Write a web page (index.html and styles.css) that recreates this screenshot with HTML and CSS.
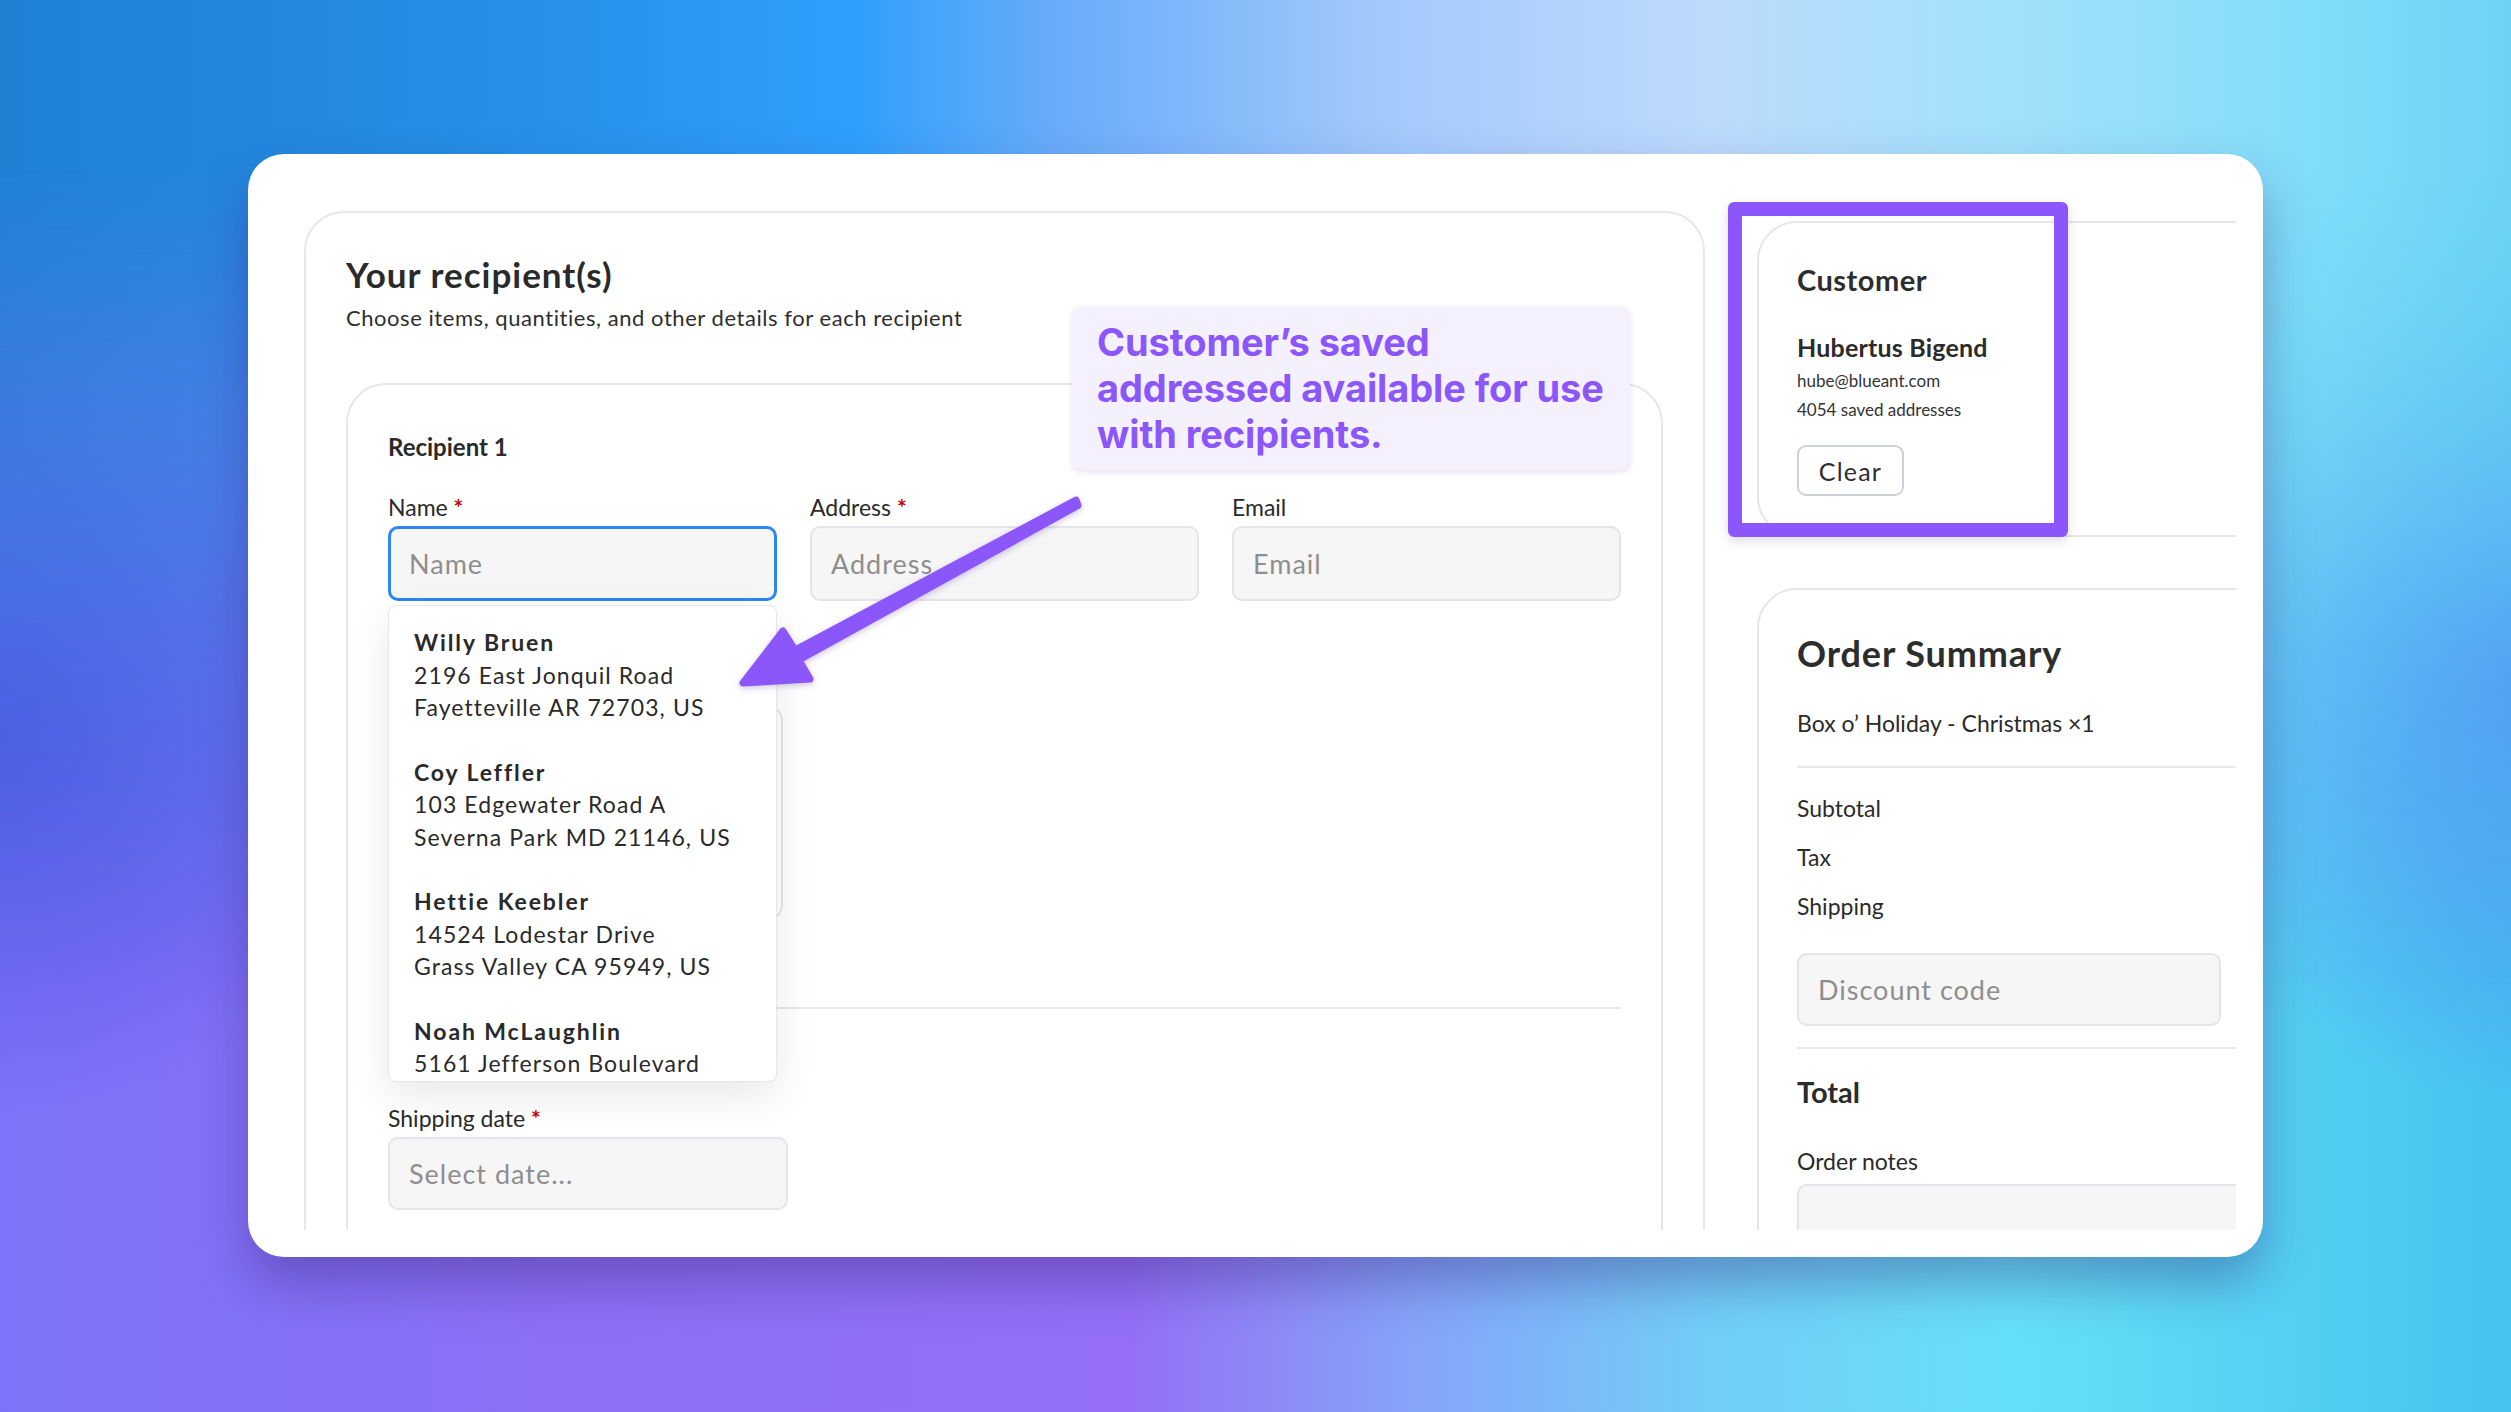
FILE: index.html
```html
<!DOCTYPE html>
<html lang="en">
<head>
  <meta charset="UTF-8" />
  <meta name="viewport" content="width=device-width, initial-scale=1.0"/>
  <title>Recipients - Checkout</title>
  <link rel="stylesheet" href="styles.css">
</head>
<body>
  <div class="frame">
    <div class="viewport">
      <div class="page">

        <!-- left: recipients form -->
        <section class="card recipients">
          <h1>Your recipient(s)</h1>
          <p class="lead">Choose items, quantities, and other details for each recipient</p>

          <div class="card recipient">
            <h3>Recipient 1</h3>
            <div class="fields">
              <div class="field">
                <label>Name <span class="req">*</span></label>
                <div class="combo">
                  <input class="input focused" placeholder="Name">
                  <ul class="suggest">
                    <li><b>Willy Bruen</b><span>2196 East Jonquil Road</span><span>Fayetteville AR 72703, US</span></li>
                    <li><b>Coy Leffler</b><span>103 Edgewater Road A</span><span>Severna Park MD 21146, US</span></li>
                    <li><b>Hettie Keebler</b><span>14524 Lodestar Drive</span><span>Grass Valley CA 95949, US</span></li>
                    <li><b>Noah McLaughlin</b><span>5161 Jefferson Boulevard</span></li>
                  </ul>
                </div>
              </div>
              <div class="field">
                <label>Address <span class="req">*</span></label>
                <input class="input" placeholder="Address">
              </div>
              <div class="field">
                <label>Email</label>
                <input class="input" placeholder="Email">
              </div>
            </div>

            <div class="items-box"></div>
            <hr class="divider">

            <div class="field date-field">
              <label>Shipping date <span class="req">*</span></label>
              <input class="input" placeholder="Select date...">
            </div>
          </div>
        </section>

        <!-- right: customer + summary -->
        <aside class="sidebar">
          <section class="card customer">
            <h2>Customer</h2>
            <div class="cust-name">Hubertus Bigend</div>
            <div class="cust-meta">hube@blueant.com</div>
            <div class="cust-meta">4054 saved addresses</div>
            <button class="btn">Clear</button>
          </section>
          <div class="highlight"></div>

          <section class="card summary">
            <h2 class="big">Order Summary</h2>
            <div class="line-item">Box o’ Holiday - Christmas ×1</div>
            <hr class="divider">
            <div class="row">Subtotal</div>
            <div class="row">Tax</div>
            <div class="row">Shipping</div>
            <input class="input discount" placeholder="Discount code">
            <hr class="divider">
            <div class="total">Total</div>
            <label class="notes-label">Order notes</label>
            <textarea class="input notes"></textarea>
          </section>
        </aside>

      </div>
    </div>
  </div>

  <!-- annotation -->
  <div class="callout">Customer’s saved addressed available for use with recipients.</div>
  <svg class="arrow" viewBox="0 0 2511 1412" width="2511" height="1412">
    <polygon points="1076,500 795,650 783,631 743,683 810,679 799,660 1078,505.5"
             fill="#8b56fa" stroke="#8b56fa" stroke-width="7" stroke-linejoin="round"/>
  </svg>
</body>
</html>
```

FILE: styles.css
```css
* { box-sizing: border-box; }

html, body { margin: 0; }

body {
  position: relative;
  width: 2511px;
  height: 1412px;
  overflow: hidden;
  padding: 154px 248px 0 248px;
  font-family: 'Lato', 'Noto Sans', sans-serif;
  color: #2b2b2b;
  background:
    radial-gradient(ellipse 420px 380px at 0% 52%, rgba(88, 84, 232, 0.95), rgba(88, 84, 232, 0) 100%),
    radial-gradient(ellipse 380px 420px at 100% 48%, rgba(74, 136, 243, 0.9), rgba(74, 136, 243, 0) 100%),
    linear-gradient(90deg, #7b73f7 0%, #8c6ff5 22%, #946ff6 45%, #86a3f8 56%, #72cdf8 68%, #66e0f8 80%, #47c2ef 100%);
}

/* top band of the backdrop, fading out downwards */
body::before {
  content: "";
  position: absolute;
  inset: 0;
  z-index: 0;
  background: linear-gradient(90deg, #1e81d4 0%, #268fe6 20%, #2f9ffb 34%, #68acfa 42%, #a3c9fb 55%, #bcdafc 68%, #a2e1fa 80%, #82ddf8 92%, #6dd3f5 100%);
  -webkit-mask-image: linear-gradient(180deg, #000 0%, #000 12%, rgba(0,0,0,0.35) 45%, transparent 70%);
  mask-image: linear-gradient(180deg, #000 0%, #000 12%, rgba(0,0,0,0.35) 45%, transparent 70%);
}

.frame {
  position: relative;
  z-index: 1;
  height: 1103px;
  padding: 0 27px 27px 0;
  background: #fff;
  border-radius: 36px;
  box-shadow: 0 26px 50px rgba(45, 25, 110, 0.35);
}

.viewport {
  height: 100%;
  overflow: hidden;
  border-radius: 36px 0 0 36px;
}

.page {
  display: flex;
  align-items: flex-start;
  gap: 52px;
  padding: 57px 0 0 56px;
}

.card {
  background: #fff;
  border: 2px solid #e7e7eb;
  border-radius: 40px;
}

/* ---------- recipients ---------- */
.recipients {
  flex: none;
  width: 1401px;
  padding: 40px 40px 60px 40px;
}

h1 {
  margin: 0;
  font-size: 35px;
  line-height: 42px;
  font-weight: 700;
  letter-spacing: 1px;
  color: #2a2a2a;
}

.lead {
  margin: 10px 0 0;
  font-size: 22px;
  line-height: 26px;
  letter-spacing: 0.55px;
  color: #2e2e2e;
}

.recipient {
  margin-top: 52px;
  padding: 47px 40px 60px 40px;
}

h3 {
  margin: 0;
  font-size: 24px;
  line-height: 29px;
  font-weight: 700;
}

.fields {
  display: grid;
  grid-template-columns: repeat(3, 1fr);
  gap: 33px;
  margin-top: 32px;
}

.field label {
  display: block;
  font-size: 23px;
  line-height: 28px;
  margin-bottom: 5px;
  color: #2a2a2a;
}

.req { color: #c40000; font-weight: 700; }

.input {
  display: block;
  width: 100%;
  height: 75px;
  padding: 0 19px;
  border: 2px solid #e5e5e9;
  border-radius: 10px;
  background: #f6f6f7;
  font-family: inherit;
  font-size: 27px;
  letter-spacing: 1px;
  color: #333;
  outline: none;
}
.input::placeholder { color: #8e8e8e; }

.input.focused {
  border: 3px solid #2f84f6;
  padding-left: 18px;
}

.combo { position: relative; }

.suggest {
  position: absolute;
  z-index: 5;
  top: calc(100% + 4px);
  left: 0;
  width: 100%;
  height: 477px;
  overflow: hidden;
  margin: 0;
  padding: 4px 0 0;
  list-style: none;
  background: #fff;
  border: 1px solid #e6e6ea;
  border-radius: 8px;
  box-shadow: 0 14px 40px rgba(0, 0, 0, 0.09);
}

.suggest li {
  padding: 16px 25px;
  font-size: 23px;
  line-height: 32.5px;
  letter-spacing: 1.1px;
  color: #2a2a2a;
}
.suggest li b, .suggest li span { display: block; }
.suggest li b { font-weight: 700; letter-spacing: 1.9px; }

.items-box {
  width: 395px;
  height: 216px;
  margin-top: 104px;
  border: 2px solid #e6e6ea;
  border-radius: 16px;
}

.divider {
  margin: 0;
  border: none;
  border-top: 2px solid #e8e8ec;
}
.recipient .divider { margin-top: 86px; }

.date-field { margin-top: 95px; width: 400px; }
.date-field .input { height: 73px; }

/* ---------- sidebar ---------- */
.sidebar {
  position: relative;
  flex: none;
  width: 520px;
  margin-top: 10px;
}

.customer { padding: 39px 40px 39px 38px; }

h2 {
  margin: 0;
  font-size: 29px;
  line-height: 35px;
  font-weight: 700;
  letter-spacing: 0.5px;
  color: #2d2d2d;
}

.cust-name {
  margin-top: 35px;
  font-size: 25px;
  line-height: 30px;
  font-weight: 700;
  letter-spacing: 0.2px;
}

.cust-meta {
  font-size: 17px;
  line-height: 29px;
  color: #333;
}
.cust-name + .cust-meta { margin-top: 4px; }

.btn {
  display: block;
  margin-top: 21px;
  width: 107px;
  height: 51px;
  padding: 0;
  background: #fff;
  border: 2px solid #cfd1da;
  border-radius: 9px;
  font-family: inherit;
  font-size: 25px;
  letter-spacing: 1.2px;
  color: #2e2e2e;
}

/* purple marker round the customer card */
.highlight {
  position: absolute;
  left: -29px;
  top: -19px;
  width: 340px;
  height: 335px;
  border: 14px solid #8b56fb;
  border-radius: 6px;
  box-shadow: 0 4px 12px rgba(40, 20, 90, 0.15);
}

.summary {
  margin-top: 51px;
  padding: 42px 0 0 38px;
  height: 700px;
}

h2.big {
  font-size: 36px;
  line-height: 43px;
  letter-spacing: 0.9px;
}

.line-item {
  margin-top: 34px;
  font-size: 23px;
  line-height: 29px;
}

.summary .divider { margin-top: 28px; }

.row {
  font-size: 23px;
  line-height: 29px;
  margin-top: 20px;
}
.summary .divider + .row { margin-top: 26px; }

.discount {
  width: 424px;
  height: 73px;
  margin-top: 32px;
}
.discount + .divider { margin-top: 21px !important; }

.total {
  margin-top: 25px;
  font-size: 29px;
  line-height: 35px;
  font-weight: 700;
}

.notes-label {
  display: block;
  margin-top: 38px;
  font-size: 23px;
  line-height: 29px;
}

.notes {
  margin-top: 8px;
  height: 120px;
  resize: none;
}

/* ---------- annotation ---------- */
.callout {
  position: absolute;
  z-index: 3;
  left: 1072px;
  top: 307px;
  width: 558px;
  height: 163px;
  padding: 12px 20px 0 25px;
  background: #f4f0fe;
  border-radius: 9px;
  box-shadow: 0 2px 6px rgba(60, 40, 120, 0.14);
  font-family: 'Inter', 'Lato', sans-serif;
  font-size: 38px;
  line-height: 46px;
  font-weight: 700;
  letter-spacing: -0.1px;
  color: #8b56fa;
}

.arrow {
  position: absolute;
  z-index: 4;
  left: 0;
  top: 0;
  pointer-events: none;
  filter: drop-shadow(0 2px 3px rgba(60, 30, 130, 0.25));
}
```
